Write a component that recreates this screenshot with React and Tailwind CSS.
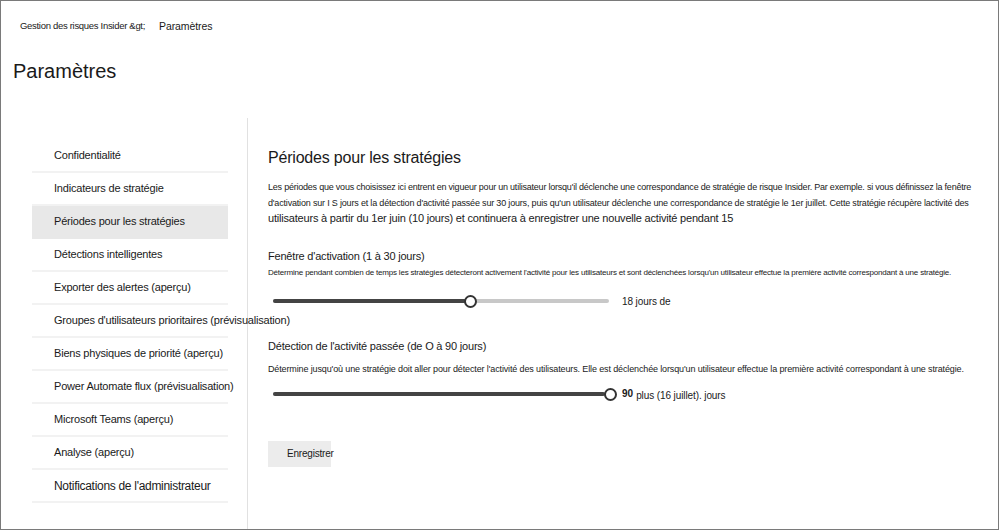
import React from 'react';

const navItems = [
  'Confidentialité',
  'Indicateurs de stratégie',
  'Périodes pour les stratégies',
  'Détections intelligentes',
  'Exporter des alertes (aperçu)',
  "Groupes d'utilisateurs prioritaires (prévisualisation)",
  'Biens physiques de priorité (aperçu)',
  'Power Automate flux (prévisualisation)',
  'Microsoft Teams (aperçu)',
  'Analyse (aperçu)',
  "Notifications de l'administrateur",
];

const Slider = ({ width, filled, thumb }) => (
  <div className="relative h-[14px]" style={{ width }}>
    <div className="absolute left-0 right-0 top-[5px] h-[4px] rounded-full bg-[#c8c8c8]" />
    <div className="absolute left-0 top-[5px] h-[4px] rounded-full bg-[#444444]" style={{ width: filled }} />
    <div
      className="absolute top-px h-[13px] w-[13px] rounded-full border-2 border-[#333333] bg-white"
      style={{ left: thumb - 6 }}
    />
  </div>
);

export default function App() {
  return (
    <div className="w-[999px] h-[530px] border border-[#7a7a7a] bg-white text-[#1a1a1a] overflow-hidden font-['Liberation_Sans',Arial,sans-serif]">
      {/* Breadcrumb */}
      <div className="flex items-center pt-[17px] pl-[19px] leading-4">
        <span className="text-[9.5px] tracking-[-0.3px]">Gestion des risques Insider &amp;gt;</span>
        <span className="ml-[14px] text-[10.5px] tracking-[-0.1px]">Paramètres</span>
      </div>

      <h1 className="mt-[25px] pl-[12px] text-[20px] leading-6">Paramètres</h1>

      <div className="flex mt-[35px] h-[412px]">
        {/* Sidebar */}
        <div className="w-[247px] shrink-0 border-r border-[#e1e1e1] pt-[22px] pl-[31px]">
          <ul className="w-[196px]">
            {navItems.map((item, i) => (
              <li
                key={item}
                className={
                  'h-[33px] flex items-center pl-[22px] whitespace-nowrap border-b-2 ' +
                  (i === 2 ? 'bg-[#e8e8e8] border-[#e8e8e8] ' : 'border-[#f2f2f2] ') +
                  (i === 10 ? 'text-[12px] tracking-[-0.3px]' : 'text-[11px] tracking-[-0.2px]')
                }
              >
                {item}
              </li>
            ))}
          </ul>
        </div>

        {/* Content */}
        <div className="flex-1 pl-[20px] pt-[30px]">
          <h2 className="text-[16px] leading-5 tracking-[-0.2px]">Périodes pour les stratégies</h2>

          <div className="mt-[12px] leading-[15.5px] whitespace-nowrap">
            <div className="text-[9px] tracking-[-0.22px]">
              Les périodes que vous choisissez ici entrent en vigueur pour un utilisateur lorsqu'il déclenche une correspondance de stratégie de risque Insider. Par exemple. si vous définissez la fenêtre
            </div>
            <div className="text-[9px] tracking-[-0.18px]">
              d'activation sur I S jours et la détection d'activité passée sur 30 jours, puis qu'un utilisateur déclenche une correspondance de stratégie le 1er juillet. Cette stratégie récupère lactivité des
            </div>
            <div className="text-[11px] tracking-[-0.2px]">
              utilisateurs à partir du 1er juin (10 jours) et continuera à enregistrer une nouvelle activité pendant 15
            </div>
          </div>

          <div className="mt-[21px] text-[11px] leading-4 tracking-[-0.2px]">Fenêtre d'activation (1 à 30 jours)</div>
          <div className="mt-[3px] text-[8px] leading-3 tracking-[-0.2px] whitespace-nowrap">
            Détermine pendant combien de temps les stratégies détecteront activement l'activité pour les utilisateurs et sont déclenchées lorsqu'un utilisateur effectue la première activité correspondant à une stratégie.
          </div>
          <div className="mt-[15px] flex items-center pl-[5px]">
            <Slider width={336} filled={193} thumb={197} />
            <span className="ml-[13px] text-[10px] tracking-[-0.1px]">18 jours de</span>
          </div>

          <div className="mt-[29px] text-[11px] leading-4 tracking-[-0.2px]">Détection de l'activité passée (de O à 90 jours)</div>
          <div className="mt-[9px] text-[9px] leading-3 tracking-[-0.13px] whitespace-nowrap">
            Détermine jusqu'où une stratégie doit aller pour détecter l'activité des utilisateurs. Elle est déclenchée lorsqu'un utilisateur effectue la première activité correspondant à une stratégie.
          </div>
          <div className="mt-[10px] flex items-center pl-[5px]">
            <Slider width={343} filled={332} thumb={337} />
            <span className="ml-[6px] text-[10px] font-bold">90</span>
            <span className="ml-[3px] mt-[3px] text-[10px] tracking-[-0.1px]">plus (16 juillet). jours</span>
          </div>

          <button className="mt-[38px] h-[26px] w-[63px] bg-[#ececec] pl-[19px] text-left text-[10px] tracking-[-0.2px] whitespace-nowrap">
            Enregistrer
          </button>
        </div>
      </div>
    </div>
  );
}
